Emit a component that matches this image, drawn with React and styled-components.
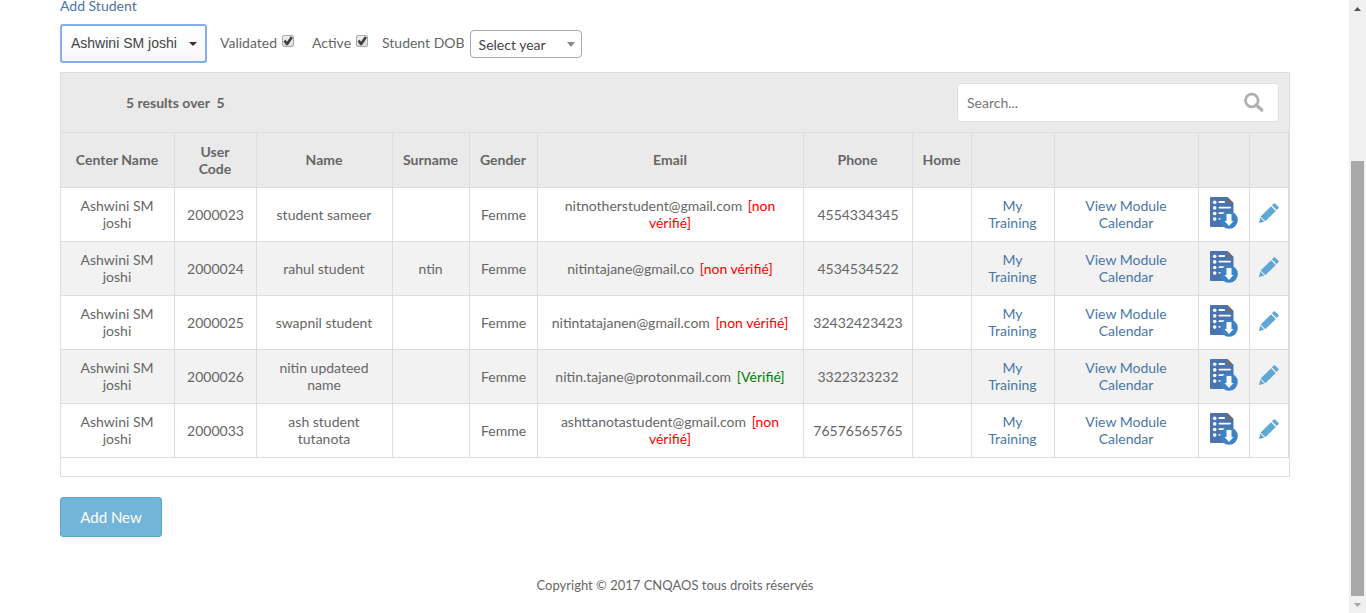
import React from "react";
import styled, { createGlobalStyle } from "styled-components";

const GlobalStyle = createGlobalStyle`
  *, *::before, *::after { box-sizing: border-box; }
  body {
    margin: 0;
    background: #fff;
    color: #666;
    font-family: Lato, "Open Sans", sans-serif;
    font-size: 14px;
    line-height: 17px;
  }
  button, input, select { font: inherit; color: inherit; margin: 0; }
`;

const Shell = styled.div`
  display: grid;
  grid-template-columns: minmax(0, 1fr) 17px;
  align-items: start;
`;

const Page = styled.main`
  padding: 0 59px 0 60px;
`;

const TextLink = styled.a`
  color: #4a76a8;
  text-decoration: none;
`;

const TopLink = styled(TextLink)`
  display: block;
  width: max-content;
  line-height: 12px;
`;

const Filters = styled.form`
  display: flex;
  align-items: center;
  margin: 12px 0 10px;
  height: 38px;
`;

const SelectWrap = styled.span`
  position: relative;
  display: inline-flex;
  &::after {
    content: "";
    position: absolute;
    pointer-events: none;
    right: ${(p) => (p.$large ? 10 : 7)}px;
    top: ${(p) => (p.$large ? 18 : 12)}px;
    border: 4px solid transparent;
    border-top: ${(p) => (p.$large ? "4px solid #333" : "5px solid #888")};
    border-bottom: 0;
  }
`;

const CenterSelect = styled.select`
  appearance: none;
  width: 147px;
  height: 39px;
  padding: 0 9px;
  border: 2px solid #84acf0;
  border-radius: 3px;
  background: linear-gradient(#fff, #f7f7f7);
  color: #444;
  font-family: "Liberation Sans", Arial, sans-serif;
  outline: none;
`;

const YearSelect = styled.select`
  appearance: none;
  width: 112px;
  height: 28px;
  padding: 1px 8px 0;
  border: 1px solid #aaa;
  border-radius: 4px;
  background: #fff;
  color: #444;
  outline: none;
`;

const CheckLabel = styled.label`
  display: flex;
  align-items: center;
  gap: 5px;
  margin-left: ${(p) => p.$gap}px;
  padding-bottom: 2px;
`;

const Check = styled.input`
  appearance: none;
  width: 12px;
  height: 12px;
  margin-bottom: 2px;
  border: 1px solid #aaa;
  border-radius: 2px;
  background: linear-gradient(#eee, #dcdcdc);
  display: grid;
  place-items: center;
  &:checked::after {
    content: "";
    width: 10px;
    height: 10px;
    background: #404040;
    clip-path: polygon(5% 52%, 25% 38%, 40% 58%, 78% 2%, 100% 18%, 48% 92%, 32% 92%);
  }
`;

const DobLabel = styled.label`
  display: flex;
  align-items: center;
  gap: 5px;
  margin-left: 14px;
  padding-top: 2px;
`;

const DobText = styled.span`
  padding-bottom: 4px;
`;

const Panel = styled.section`
  border: 1px solid #ddd;
  padding-bottom: 18px;
`;

const PanelBar = styled.div`
  display: flex;
  align-items: center;
  justify-content: space-between;
  height: 60px;
  padding: 0 10px 0 65px;
  background: #eaeaea;
  border-bottom: 1px solid #ddd;
  font-weight: 700;
`;

const Results = styled.span`
  white-space: pre;
`;

const SearchBox = styled.label`
  display: flex;
  align-items: center;
  width: 322px;
  height: 39px;
  padding: 0 13px 0 9px;
  background: #fff;
  border: 1px solid #e0e0e0;
  border-radius: 3px;
  font-weight: 400;
`;

const SearchInput = styled.input`
  flex: 1;
  min-width: 0;
  padding: 0;
  border: 0;
  background: none;
  outline: none;
  &::placeholder { color: #757575; opacity: 1; }
`;

const Table = styled.table`
  width: 100%;
  table-layout: fixed;
  border-collapse: separate;
  border-spacing: 0;
  text-align: center;
`;

const Col = styled.col`
  width: ${(p) => (p.$w ? `${p.$w}px` : "auto")};
`;

const HeadCell = styled.th`
  height: 55px;
  padding: 0 9px 1px 8px;
  background: #eaeaea;
  border: solid #ddd;
  border-width: 0 1px 1px 0;
`;

const Row = styled.tr`
  &:nth-child(even) { background: #f2f2f2; }
`;

const Cell = styled.td`
  height: 54px;
  padding: ${(p) => (p.$tight ? "0 8px 1px" : "0 11px 1px 10px")};
  border: solid #ddd;
  border-width: 0 1px 1px 0;
`;

const Status = styled.span`
  margin-left: 2px;
  color: ${(p) => (p.$ok ? "#008000" : "#f00")};
`;

const IconLink = styled.a`
  display: flex;
  justify-content: center;
  padding-bottom: 3px;
`;

const AddButton = styled.button`
  margin-top: 20px;
  width: 102px;
  height: 40px;
  border: 1px solid #5ba3cb;
  border-radius: 3px;
  background: #73b4da;
  color: #fff;
  font-size: 15px;
`;

const Footer = styled.footer`
  margin: 40px 0 19px;
  text-align: center;
  font-size: 13px;
`;

const ScrollTrack = styled.div`
  position: sticky;
  top: 0;
  height: 100vh;
  display: flex;
  flex-direction: column;
  align-items: center;
  justify-content: space-between;
  padding: 7px 0 6px;
  background: #f0f0f0;
`;

const ScrollThumb = styled.div`
  width: 13px;
  height: 71vh;
  margin: auto 0 7px;
  background: #a8a8a8;
`;

const columns = [
  ["Center Name", 114],
  ["User Code", 82],
  ["Name", 136],
  ["Surname", 77],
  ["Gender", 68],
  ["Email", 0],
  ["Phone", 109],
  ["Home", 59],
  ["", 83],
  ["", 144],
  ["", 51],
  ["", 39],
];

const students = [
  { code: "2000023", name: "student sameer", surname: "", email: "nitnotherstudent@gmail.com", ok: false, phone: "4554334345" },
  { code: "2000024", name: "rahul student", surname: "ntin", email: "nitintajane@gmail.co", ok: false, phone: "4534534522" },
  { code: "2000025", name: "swapnil student", surname: "", email: "nitintatajanen@gmail.com", ok: false, phone: "32432423423" },
  { code: "2000026", name: "nitin updateed name", surname: "", email: "nitin.tajane@protonmail.com", ok: true, phone: "3322323232" },
  { code: "2000033", name: "ash student tutanota", surname: "", email: "ashttanotastudent@gmail.com", ok: false, phone: "76576565765" },
];

const SearchIcon = () => (
  <svg width="22" height="22" viewBox="0 0 22 22" fill="none" stroke="#b0b0b0" aria-hidden="true">
    <circle cx="8.8" cy="8.5" r="6.3" strokeWidth="2.8" />
    <path d="M13.3 13l5.500 5" strokeWidth="3.4" strokeLinecap="round" />
  </svg>
);

const DocumentIcon = () => (
  <svg width="28" height="32" viewBox="0 0 28 32" aria-hidden="true">
    <path d="M1 0h16.5l6 6v24H1a1 1 0 0 1-1-1V1a1 1 0 0 1 1-1z" fill="#4a74af" />
    <path d="M17.5 0l6 6h-6z" fill="#7d6a5c" />
    <g fill="#fff">
      <circle cx="4.7" cy="5.3" r="1.8" />
      <circle cx="4.7" cy="10.9" r="1.8" />
      <circle cx="4.7" cy="16.5" r="1.8" />
      <circle cx="4.7" cy="22.1" r="1.8" />
      <rect x="8.5" y="4.1" width="6.5" height="1.8" rx=".9" />
      <rect x="8.5" y="9.7" width="12.5" height="1.8" rx=".9" />
      <rect x="8.5" y="15.3" width="6" height="1.8" rx=".9" />
      <rect x="8.5" y="20.9" width="3" height="1.8" rx=".9" />
    </g>
    <circle cx="19" cy="23" r="8.8" fill="#3f83c7" />
    <path d="M16.500 17.600q0-.6.6-.6h3.800q.6 0 .6.6V24h2L19 29l-4.500-5h2z" fill="#fff" />
  </svg>
);

const PencilIcon = () => (
  <svg width="20" height="20" viewBox="0 0 20 20" fill="#5fa8d6" aria-hidden="true">
    <path d="M14.700.5q.7-.6 1.4 0l3.300 3.300q.7.7 0 1.400l-1.800 1.800-4.700-4.700z" />
    <path d="M12.100 3.200l4.700 4.700L6.300 18.300 1.600 13.600z" />
    <path d="M1.200 14.600l4.200 4.200L0 20z" />
  </svg>
);

const StudentRow = ({ s }) => (
  <Row>
    <Cell>Ashwini SM joshi</Cell>
    <Cell $tight>{s.code}</Cell>
    <Cell>{s.name}</Cell>
    <Cell>{s.surname}</Cell>
    <Cell $tight>Femme</Cell>
    <Cell>{s.email} <Status $ok={s.ok}>{s.ok ? "[Vérifié]" : "[non vérifié]"}</Status></Cell>
    <Cell $tight>{s.phone}</Cell>
    <Cell />
    <Cell><TextLink href="#training">My Training</TextLink></Cell>
    <Cell><TextLink href="#calendar">View Module Calendar</TextLink></Cell>
    <Cell $tight><IconLink href="#download" aria-label={`Download ${s.name}`}><DocumentIcon /></IconLink></Cell>
    <Cell $tight><IconLink href="#edit" aria-label={`Edit ${s.name}`}><PencilIcon /></IconLink></Cell>
  </Row>
);

export default function App() {
  return (
    <>
      <GlobalStyle />
      <Shell>
        <Page>
          <TopLink href="#add">Add Student</TopLink>
          <Filters>
            <SelectWrap $large>
              <CenterSelect aria-label="Center"><option>Ashwini SM joshi</option></CenterSelect>
            </SelectWrap>
            <CheckLabel $gap={13}>Validated<Check type="checkbox" defaultChecked /></CheckLabel>
            <CheckLabel $gap={18}>Active<Check type="checkbox" defaultChecked /></CheckLabel>
            <DobLabel>
              <DobText>Student DOB</DobText>
              <SelectWrap>
                <YearSelect><option>Select year</option></YearSelect>
              </SelectWrap>
            </DobLabel>
          </Filters>
          <Panel>
            <PanelBar>
              <Results>{"5 results over  5"}</Results>
              <SearchBox>
                <SearchInput type="text" placeholder="Search..." aria-label="Search" />
                <SearchIcon />
              </SearchBox>
            </PanelBar>
            <Table>
              <colgroup>
                {columns.map(([, w], i) => <Col key={i} $w={w} />)}
              </colgroup>
              <thead>
                <tr>{columns.map(([label], i) => <HeadCell key={i} scope="col">{label}</HeadCell>)}</tr>
              </thead>
              <tbody>
                {students.map((s) => <StudentRow key={s.code} s={s} />)}
              </tbody>
            </Table>
          </Panel>
          <AddButton type="button">Add New</AddButton>
          <Footer>Copyright © 2017 CNQAOS tous droits réservés</Footer>
        </Page>
        <ScrollTrack aria-hidden="true">
          <svg width="7" height="4" viewBox="0 0 7 4"><path d="M0 4L3.500 0 7 4z" fill="#505050" /></svg>
          <ScrollThumb />
          <svg width="7" height="4" viewBox="0 0 7 4"><path d="M0 0h7L3.500 4z" fill="#a3a3a3" /></svg>
        </ScrollTrack>
      </Shell>
    </>
  );
}
